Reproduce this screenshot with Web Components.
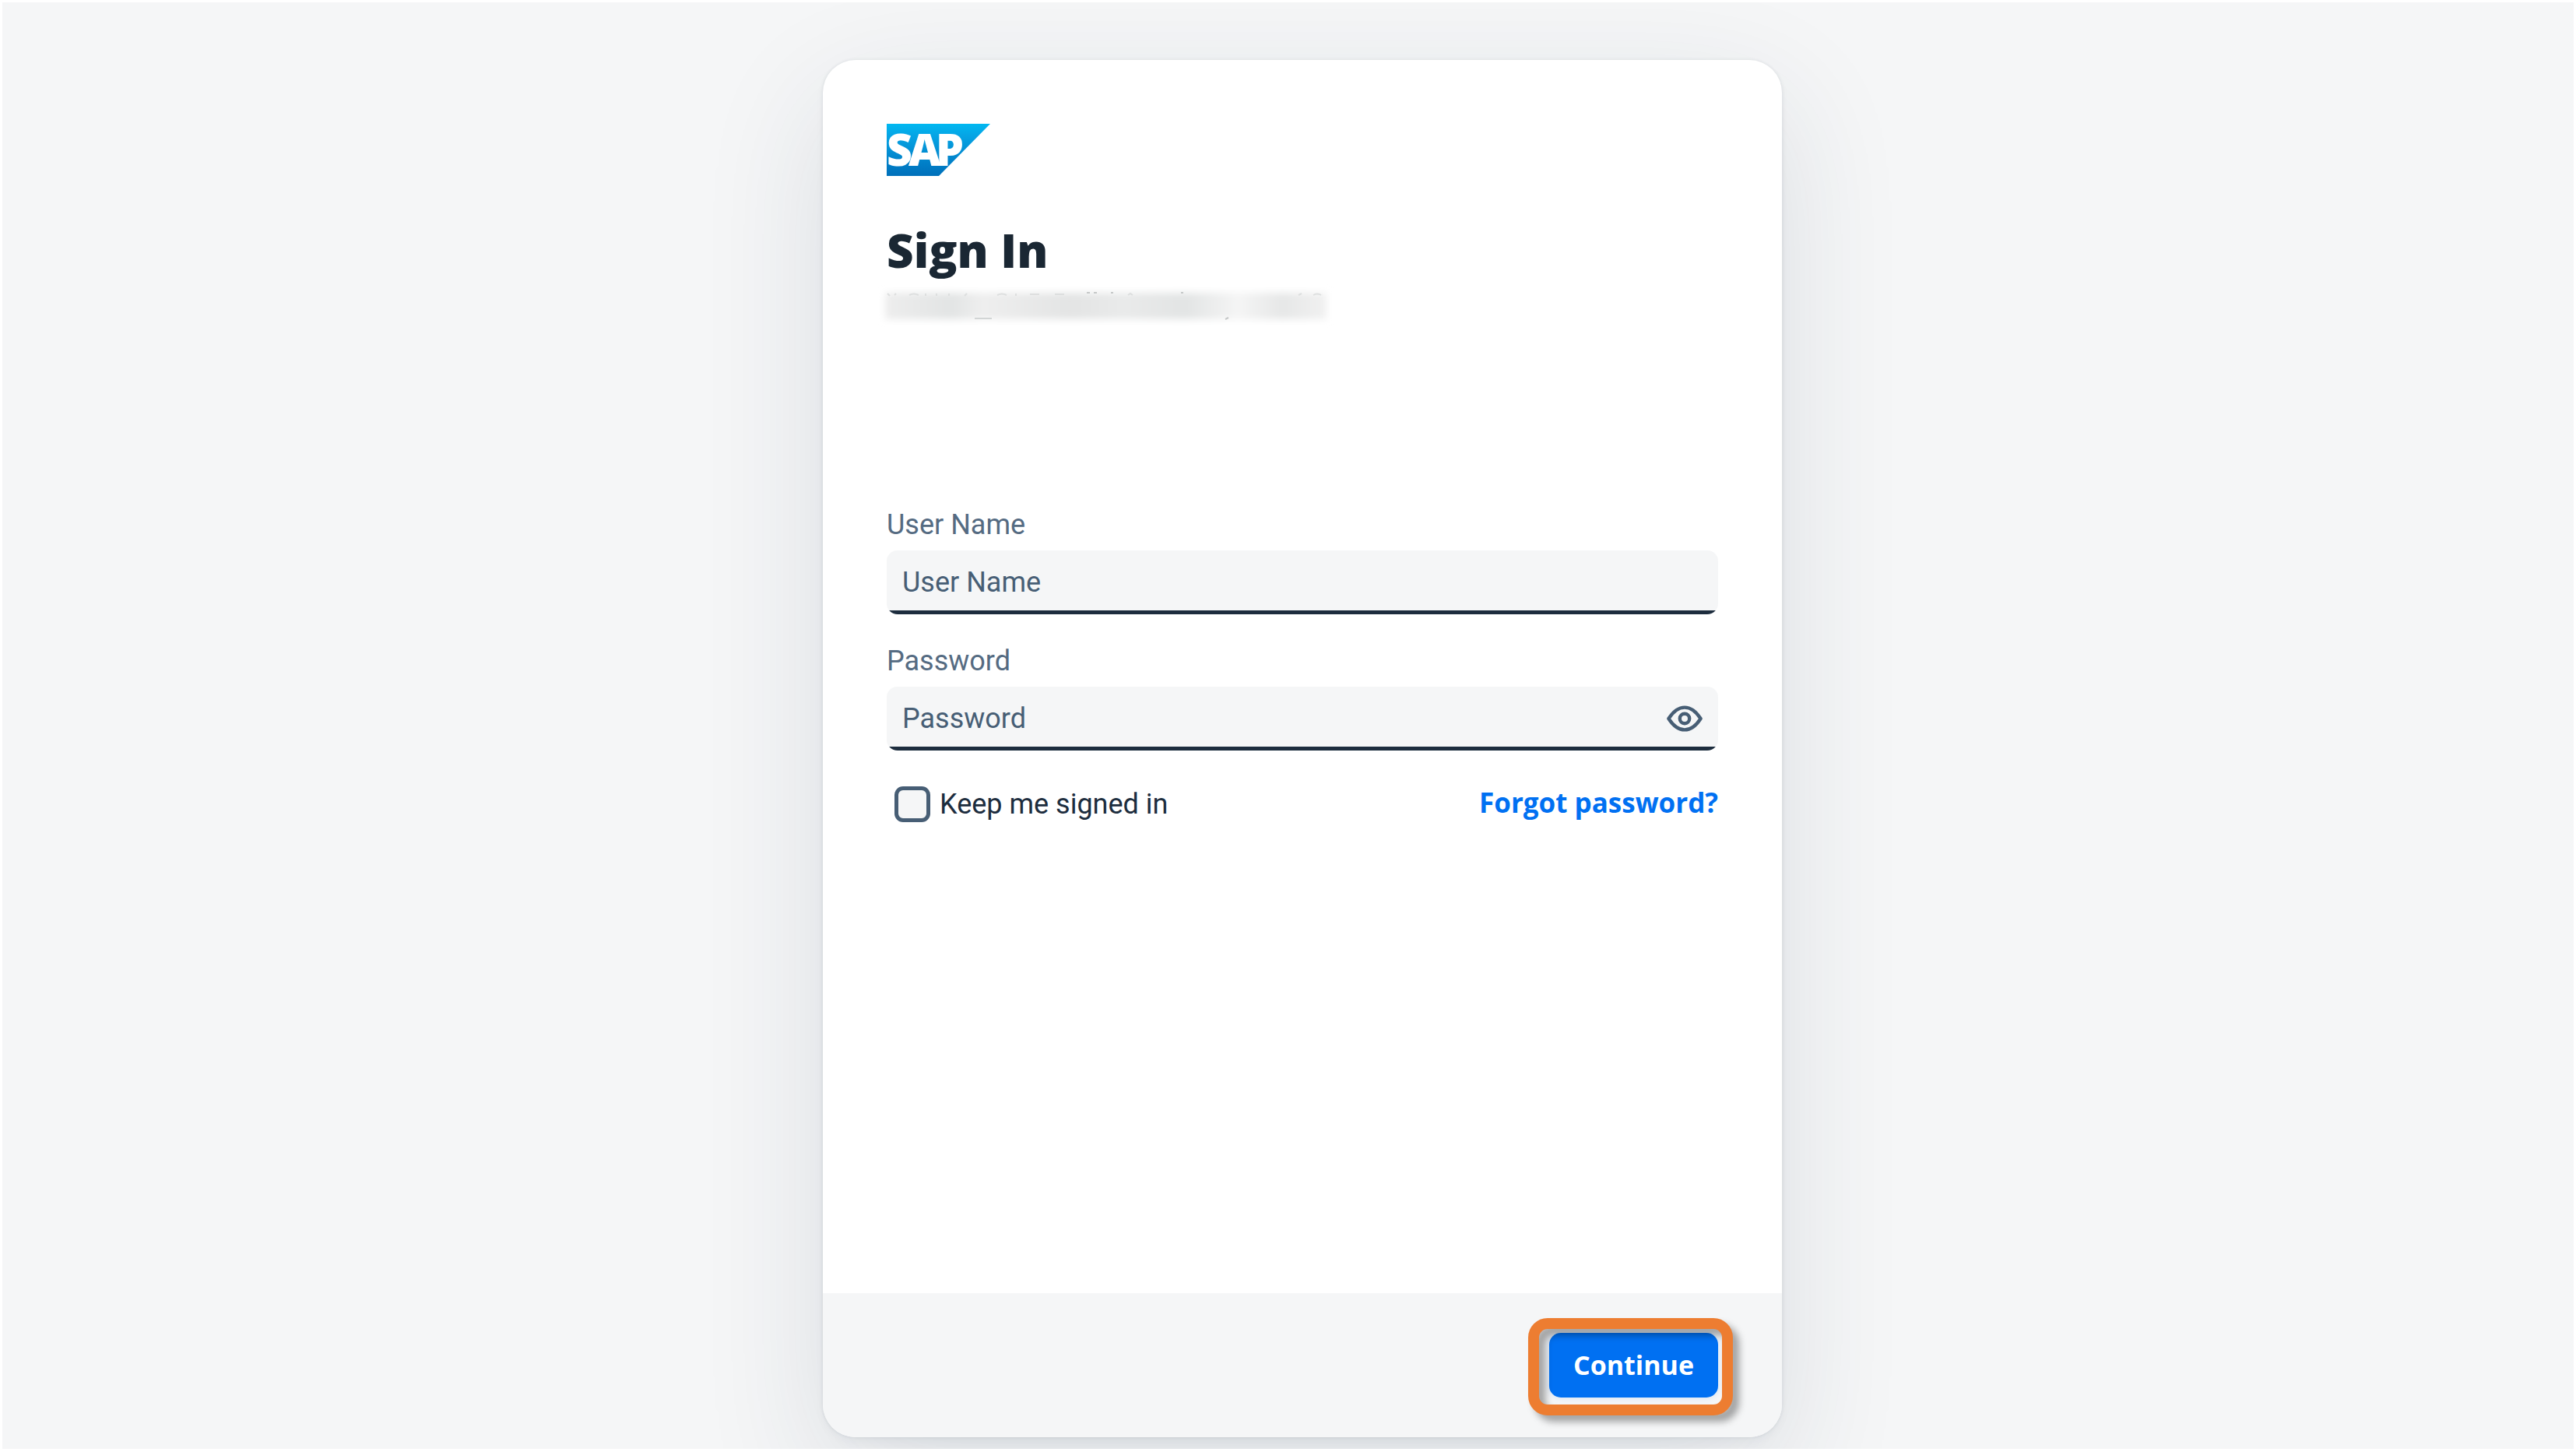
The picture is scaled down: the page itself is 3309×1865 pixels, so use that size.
<!DOCTYPE html>
<html lang="en">
<head>
<meta charset="utf-8">
<title>Sign In</title>
<style>
  :root {
    --bg: #f5f6f7;
    --ink: #1d2d3e;
    --title: #1a2733;
    --label: #556b82;
    --field-ink: #475e75;
    --brand: #0070f2;
    --text: Roboto, "Noto Sans", sans-serif;
    --strong: "Open Sans", "Noto Sans", sans-serif;
  }
  html { background: #fff; }
  body {
    margin: 0;
    min-height: 100vh;
    box-sizing: border-box;
    padding: 3px 3px 4px;
    display: flex;
    font-family: var(--text);
    font-size: 36px;
    color: var(--ink);
  }
</style>
</head>
<body>
<sign-in-page>
  <sign-in-card>
    <sap-logo slot="header"></sap-logo>
    <sign-in-title slot="header">Sign In</sign-in-title>
    <redacted-line slot="header"></redacted-line>
    <text-field label="User Name" type="text"></text-field>
    <text-field label="Password" type="password" reveal></text-field>
    <sign-in-options></sign-in-options>
    <continue-button slot="footer">Continue</continue-button>
  </sign-in-card>
</sign-in-page>

<script>
  const define = (name, html) => customElements.define(name, class extends HTMLElement {
    constructor() {
      super();
      this.attachShadow({ mode: 'open' }).innerHTML = html;
    }
  });

  define('sign-in-page', `
    <style>
      :host { flex: 1; display: flex; background: var(--bg); overflow: hidden; }
      main { flex: 1; display: flex; justify-content: center; padding: 74px 0 15px 37px; }
    </style>
    <main><slot></slot></main>`);

  define('sign-in-card', `
    <style>
      :host {
        display: flex; flex-direction: column; width: 1232px; max-width: 100%;
        background: #fff; border-radius: 42px; overflow: hidden;
        box-shadow: 0 0 4px rgba(34,53,72,.1), 0 6px 12px rgba(34,53,72,.04), 0 52px 160px rgba(34,53,72,.12);
      }
      header { padding: 82px 82px 0; min-height: 491px; display: flex; flex-direction: column; }
      form { flex: 1; padding: 0 82px; display: flex; flex-direction: column; gap: 36px; }
      footer {
        display: flex; justify-content: flex-end; align-items: flex-start;
        background: var(--bg); padding: 51px 82px;
      }
    </style>
    <header><slot name="header"></slot></header>
    <form><slot></slot></form>
    <footer><slot name="footer"></slot></footer>`);

  define('sap-logo', `
    <style>
      :host { display: block; height: 67px; }
      svg { display: block; width: 133px; height: 67px; overflow: visible; }
      text { font: 800 57px var(--strong); fill: #fff; }
    </style>
    <svg viewBox="0 0 133 67" role="img" aria-label="SAP">
      <defs>
        <linearGradient id="g" x1="0" y1="0" x2="0" y2="1">
          <stop offset="0" stop-color="#00b8f1"/>
          <stop offset=".22" stop-color="#06a5e5"/>
          <stop offset=".8" stop-color="#007cc5"/>
          <stop offset="1" stop-color="#0070ba"/>
        </linearGradient>
      </defs>
      <path d="M0 0H133L67 67H0Z" fill="url(#g)"/>
      <text x="0 28 63" y="54">SAP</text>
    </svg>`);

  define('sign-in-title', `
    <style>
      :host { display: block; margin-top: 59px; }
      h1 { margin: 0; font: 800 60px/72px var(--strong); color: var(--title); }
    </style>
    <h1><slot></slot></h1>`);

  define('redacted-line', `
    <style>
      :host { display: block; margin-top: 13px; }
      svg { display: block; width: 572px; height: 46px; margin-left: -4px; overflow: visible; }
    </style>
    <svg viewBox="0 0 572 46" aria-hidden="true">
      <defs>
        <linearGradient id="r">
          <stop offset="0" stop-color="#ededed"/>
          <stop offset=".15" stop-color="#e2e4e4"/>
          <stop offset=".22" stop-color="#eeeeee"/>
          <stop offset=".42" stop-color="#e3e4e4"/>
          <stop offset=".54" stop-color="#e9eaea"/>
          <stop offset=".68" stop-color="#e2e4e4"/>
          <stop offset=".8" stop-color="#f5f5f5"/>
          <stop offset=".9" stop-color="#e6e7e7"/>
          <stop offset="1" stop-color="#f1f1f1"/>
        </linearGradient>
        <filter id="b" x="-5%" y="-50%" width="110%" height="200%"><feGaussianBlur stdDeviation="5"/></filter>
      </defs>
      <rect x="2" y="6" width="567" height="34" fill="url(#r)" filter="url(#b)"/>
      <g fill="none" stroke="#d2d5d5" stroke-width="2">
        <path d="M117 39h22"/>
        <path d="M439 40l4-2M261 6h4M270 6h4M292 6h3M382 6h3" stroke="#c5c8c8"/>
        <path d="M5 7l3 3M16 7l-2 2M33 9q6-3 12 0M54 7v3M68 7v3M84 7v3M107 7l-3 3M146 9q6-3 12 0M170 7v3M188 8h12M220 8h12M314 9l3-2 3 2M533 9l4-2M552 9q5-3 10 0" stroke="#dddfdf"/>
      </g>
    </svg>`);

  customElements.define('text-field', class extends HTMLElement {
    constructor() {
      super();
      const label = this.getAttribute('label');
      this.attachShadow({ mode: 'open' }).innerHTML = `
        <style>
          :host { display: flex; flex-direction: column; gap: 8px; }
          label { color: var(--label); line-height: 49px; }
          .box {
            display: flex; align-items: center; height: 82px; padding: 0 20px;
            box-sizing: border-box; border-radius: 14px;
            background: linear-gradient(var(--ink), var(--ink)) bottom / 100% 5px no-repeat var(--bg);
          }
          input {
            flex: 1; min-width: 0; height: 82px; padding: 0; border: 0; outline: 0;
            background: none; font: inherit; color: var(--ink);
          }
          input::placeholder { color: var(--field-ink); opacity: 1; }
          button { display: flex; padding: 0; border: 0; background: none; }
          svg { display: block; width: 46px; height: 34px; }
        </style>
        <label for="field">${label}</label>
        <div class="box">
          <input id="field" type="${this.getAttribute('type')}" placeholder="${label}">
          ${this.hasAttribute('reveal') ? `
          <button type="button" aria-label="Show password">
            <svg viewBox="0 0 46 34" fill="none" stroke="#475e75" stroke-width="4.4" stroke-linejoin="round">
              <path d="M2.4 17C8 8.400 14.500 2.600 23 2.600S38 8.400 43.600 17C38 25.600 31.500 31.400 23 31.400S8 25.600 2.400 17Z"/>
              <circle cx="23" cy="17" r="6.200"/>
            </svg>
          </button>` : ''}
        </div>`;
    }
  });

  define('sign-in-options', `
    <style>
      :host { display: flex; justify-content: space-between; align-items: flex-start; margin-top: 10px; }
      label { display: flex; align-items: center; gap: 12px; margin-left: 10px; line-height: 46px; }
      input {
        appearance: none; box-sizing: border-box; width: 46px; height: 46px; margin: 0;
        border: 5px solid var(--field-ink); border-radius: 11px; background: var(--bg);
      }
      a { font: 700 35px/42px var(--strong); color: var(--brand); text-decoration: none; }
    </style>
    <label for="keep"><input id="keep" type="checkbox">Keep me signed in</label>
    <a href="#">Forgot password?</a>`);

  define('continue-button', `
    <style>
      :host { display: block; position: relative; }
      button {
        display: block; height: 83px; padding: 0 31px; border: 0; border-radius: 15px;
        background: var(--brand); color: #fff; font: 700 34px/83px var(--strong);
        box-shadow: 0 0 8px rgba(0,112,242,.16);
      }
      .callout {
        position: absolute; inset: -19px -19px -23px -27px; box-sizing: border-box;
        border: 14px solid #ed7d31; border-radius: 25px; pointer-events: none;
        filter: drop-shadow(8px 8px 5px rgba(0,0,0,.35));
      }
    </style>
    <button type="submit"><slot></slot></button>
    <div class="callout"></div>`);
</script>
</body>
</html>
